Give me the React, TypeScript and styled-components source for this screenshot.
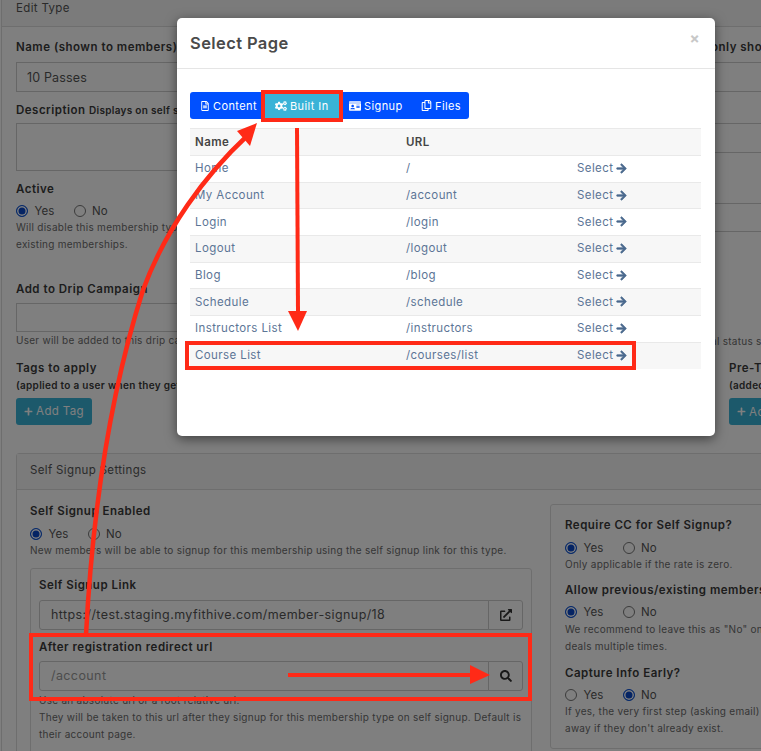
import React from "react";
import styled, { createGlobalStyle } from "styled-components";
import { FaArrowRight, FaCogs, FaExternalLinkAlt, FaPlus, FaRegCopy, FaRegFileAlt, FaIdCard, FaSearch } from "react-icons/fa";

const Global = createGlobalStyle`
  html, body { margin: 0; padding: 0; background: #808080; }
  * { box-sizing: border-box; }
  body { font-family: "Inter", "Liberation Sans", sans-serif; }
`;

const Viewport = styled.div`
  position: relative;
  width: 761px;
  height: 751px;
  overflow: hidden;
  background: #fff;
`;

const Page = styled.div`
  width: 1200px;
  color: #3f3f3f;
  font-size: 11.5px;
  letter-spacing: 0.35px;
`;

const PageCard = styled.div`
  margin-left: 1px;
  border-left: 1px solid #dcdcdc;
`;

const CardTitle = styled.div`
  height: 27px;
  padding: 1px 0 0 14px;
  font-size: 11.5px;
  color: #555;
  background: #f7f7f7;
  border-bottom: 1px solid #ddd;
  line-height: 15px;
`;

const CardBody = styled.div`
  padding: 13px 0 0 14px;
  display: grid;
  grid-template-columns: 695px 420px;
`;

const Col = styled.div`
  display: flex;
  flex-direction: column;
`;

const Label = styled.div`
  font-size: 11.5px;
  font-weight: 600;
  color: #3a3a3a;
  line-height: 15px;
  letter-spacing: 0.5px;
  white-space: nowrap;
`;

const SmallBold = styled.span`
  font-size: 10px;
  font-weight: 600;
  letter-spacing: 0.3px;
`;

const Input = styled.div<{ $h?: number; $t?: number }>`
  height: ${(p) => p.$h ?? 30}px;
  margin-top: ${(p) => p.$t ?? 7}px;
  padding: 0 10px;
  display: flex;
  align-items: center;
  border: 1px solid #ccc;
  background: #fff;
  font-size: 12.5px;
  letter-spacing: 0.15px;
  color: #555;
`;

const Spaced = styled.div<{ $t: number; $l?: number }>`
  margin-top: ${(p) => p.$t}px;
  padding-left: ${(p) => p.$l ?? 0}px;
`;

const Radios = styled.div`
  display: flex;
  gap: 19px;
  align-items: center;
  height: 16px;
  margin-top: 6.5px;
  font-size: 11.5px;
  letter-spacing: 0.1px;
  color: #555;
`;

const RadioItem = styled.label`
  display: flex;
  align-items: center;
  gap: 6.5px;
`;

const RadioDot = styled.span<{ $on?: boolean }>`
  width: 12px;
  height: 12px;
  border-radius: 50%;
  border: 1px solid ${(p) => (p.$on ? "#0d55d8" : "#777")};
  background: ${(p) => (p.$on ? "#0a48c8" : "#fff")};
  box-shadow: ${(p) => (p.$on ? "inset 0 0 0 1.5px #fff" : "none")};
`;

const Help = styled.div<{ $t?: number }>`
  margin-top: ${(p) => p.$t ?? 0}px;
  font-size: 10px;
  line-height: 17px;
  letter-spacing: 0.27px;
  white-space: nowrap;
  color: #6c6c6c;
`;

const BoldHelp = styled(Help)`
  margin-top: 1px;
  color: #3a3a3a;
`;

const TagButton = styled.div`
  width: 76px;
  height: 27px;
  margin-top: 4px;
  display: flex;
  align-items: center;
  justify-content: center;
  gap: 3px;
  background: #39b3d7;
  border-radius: 3px;
  color: #fff;
  font-size: 11.5px;
`;

const SignupCard = styled.div`
  margin: 27.5px 0 0 14px;
  width: 1000px;
  border: 1px solid #ddd;
  border-radius: 3px;
`;

const SignupHead = styled.div`
  height: 36px;
  padding: 0 0 2px 13px;
  display: flex;
  align-items: center;
  background: #f7f7f7;
  border-bottom: 1px solid #ddd;
  font-size: 11.5px;
  color: #555;
`;

const SignupBody = styled.div`
  padding: 14px 13px 0;
  display: grid;
  grid-template-columns: 502px 420px;
  column-gap: 18px;
  align-items: start;
`;

const LeftCol = styled(Col)`
  padding-top: 0.5px;
`;

const InnerBox = styled.div`
  margin-top: 9.5px;
  padding: 9px 8px 0;
  height: 240px;
  border: 1px solid #ddd;
  border-radius: 3px;
`;

const InputGroup = styled.div<{ $t: number }>`
  margin-top: ${(p) => p.$t}px;
  display: flex;
  height: 30px;
`;

const GroupInput = styled.div<{ $muted?: boolean }>`
  flex: 1;
  padding-left: 11px;
  display: flex;
  align-items: center;
  border: 1px solid #ccc;
  border-radius: 3px 0 0 3px;
  font-size: 12.5px;
  letter-spacing: 0.4px;
  color: ${(p) => (p.$muted ? "#999" : "#555")};
`;

const GroupButton = styled.div`
  width: 35px;
  margin-left: -1px;
  display: flex;
  align-items: center;
  justify-content: center;
  border: 1px solid #ccc;
  border-radius: 0 3px 3px 0;
  color: #333;
  font-size: 12px;
`;

const SideBox = styled.div`
  padding: 13.5px 14px 0;
  height: 245px;
  border: 1px solid #ddd;
  border-radius: 3px;
`;

const Shade = styled.div`
  position: absolute;
  inset: 0;
  background: rgba(0, 0, 0, 0.5);
`;

const Modal = styled.div`
  position: absolute;
  left: 177px;
  top: 18px;
  width: 538px;
  height: 418px;
  background: #fff;
  border-radius: 5px;
  box-shadow: 0 3px 12px rgba(0, 0, 0, 0.5);
  letter-spacing: 0.4px;
`;

const ModalHead = styled.div`
  height: 51px;
  padding: 0 15px 0 13px;
  display: flex;
  align-items: center;
  justify-content: space-between;
  border-bottom: 1px solid #e5e5e5;
`;

const ModalTitle = styled.div`
  font-size: 16.5px;
  font-weight: 600;
  color: #4a4a4a;
`;

const Close = styled.div`
  font-size: 15px;
  font-weight: 700;
  color: #c8c8c8;
  margin-top: -10px;
`;

const ModalBody = styled.div`
  padding: 23px 14px 0 13px;
`;

const Tabs = styled.div`
  display: inline-flex;
  height: 27px;
  background: #0050ff;
  border-radius: 3px;
`;

const Tab = styled.div<{ $active?: boolean; $w: number }>`
  width: ${(p) => p.$w}px;
  padding-left: 10px;
  display: flex;
  align-items: center;
  gap: 3px;
  color: #fff;
  font-size: 11px;
  background: ${(p) => (p.$active ? "#39b3d7" : "transparent")};
`;

const Table = styled.table`
  margin-top: 9px;
  width: 511px;
  border-collapse: collapse;
  table-layout: fixed;
  font-size: 11.5px;
`;

const Th = styled.th<{ $w?: number }>`
  height: 27px;
  padding: 0 5px;
  text-align: left;
  font-weight: 600;
  color: #444;
  background: #f7f7f7;
  border-top: 1px solid #e9e9e9;
  border-bottom: 1px solid #e9e9e9;
  ${(p) => (p.$w ? `width: ${p.$w}px;` : "")}
`;

const Tr = styled.tr`
  &:nth-child(even) td { background: #f7f7f7; }
`;

const Td = styled.td`
  height: 26.7px;
  padding: 0 5px 1px;
  color: #5c7596;
  border-bottom: 1px solid #e9e9e9;
  tr:last-child & { border-bottom: 0; }
`;

const SelectLink = styled.span`
  display: inline-flex;
  align-items: center;
  gap: 3px;
  svg {
    color: #4b6a8e;
    font-size: 11px;
    stroke: currentColor;
    stroke-width: 30;
  }
`;

const Annotations = styled.svg`
  position: absolute;
  left: 0;
  top: 0;
  width: 761px;
  height: 751px;
  pointer-events: none;
`;

const rows: [string, string][] = [
  ["Home", "/"],
  ["My Account", "/account"],
  ["Login", "/login"],
  ["Logout", "/logout"],
  ["Blog", "/blog"],
  ["Schedule", "/schedule"],
  ["Instructors List", "/instructors"],
  ["Course List", "/courses/list"],
];

const Radio = ({ yes }: { yes: boolean }) => (
  <Radios>
    <RadioItem><RadioDot $on={yes} />Yes</RadioItem>
    <RadioItem><RadioDot $on={!yes} />No</RadioItem>
  </Radios>
);

export default function App() {
  return (
    <Viewport>
      <Global />
      <Page>
        <PageCard>
          <CardTitle>Edit Type</CardTitle>
          <CardBody>
            <Col>
              <Label>Name (shown to members)</Label>
              <Input>10 Passes</Input>
              <Spaced $t={11}><Label>Description <SmallBold>Displays on self signup</SmallBold></Label></Spaced>
              <Input $h={48} $t={5} />
              <Spaced $t={10.5}><Label>Active</Label></Spaced>
              <Radio yes />
              <Help>Will disable this membership type for new<br />existing memberships.</Help>
              <Spaced $t={28.5}><Label>Add to Drip Campaign</Label></Spaced>
              <Input $h={29} $t={6.5} />
              <Help>User will be added to this drip campaign</Help>
              <Spaced $t={11.5}><Label>Tags to apply</Label></Spaced>
              <BoldHelp><SmallBold>(applied to a user when they get this)</SmallBold></BoldHelp>
              <TagButton><FaPlus size={9} />Add Tag</TagButton>
            </Col>
            <Col>
              <Label>only shown</Label>
              <Input />
              <Input $t={31} />
              <Input $h={29} $t={50} />
              <Help $t={100.5}>al status settings</Help>
              <Spaced $t={11.5} $l={18}>
                <Label>Pre-Tags</Label>
                <BoldHelp><SmallBold>(added to a user)</SmallBold></BoldHelp>
                <TagButton><FaPlus size={9} />Add Tag</TagButton>
              </Spaced>
            </Col>
          </CardBody>
          <SignupCard>
            <SignupHead>Self Signup Settings</SignupHead>
            <SignupBody>
              <LeftCol>
                <Label>Self Signup Enabled</Label>
                <Radio yes />
                <Help>New members will be able to signup for this membership using the self signup link for this type.</Help>
                <InnerBox>
                  <Label>Self Signup Link</Label>
                  <InputGroup $t={6.5}>
                    <GroupInput>https://test.staging.myfithive.com/member-signup/18</GroupInput>
                    <GroupButton><FaExternalLinkAlt /></GroupButton>
                  </InputGroup>
                  <Spaced $t={10.5}><Label>After registration redirect url</Label></Spaced>
                  <InputGroup $t={5.5}>
                    <GroupInput $muted>/account</GroupInput>
                    <GroupButton><FaSearch /></GroupButton>
                  </InputGroup>
                  <Help $t={1}>Use an absolute url or a root relative url.<br />They will be taken to this url after they signup for this membership type on self signup. Default is<br />their account page.</Help>
                </InnerBox>
              </LeftCol>
              <SideBox>
                <Label>Require CC for Self Signup?</Label>
                <Radio yes />
                <Help>Only applicable if the rate is zero.</Help>
                <Spaced $t={10}><Label>Allow previous/existing members</Label></Spaced>
                <Radio yes />
                <Help $t={1}>We recommend to leave this as "No" on<br />deals multiple times.</Help>
                <Spaced $t={10.5}><Label>Capture Info Early?</Label></Spaced>
                <Radio yes={false} />
                <Help>If yes, the very first step (asking email) will<br />away if they don't already exist.</Help>
              </SideBox>
            </SignupBody>
          </SignupCard>
        </PageCard>
      </Page>
      <Shade />
      <Modal>
        <ModalHead>
          <ModalTitle>Select Page</ModalTitle>
          <Close>×</Close>
        </ModalHead>
        <ModalBody>
          <Tabs>
            <Tab $w={75}><FaRegFileAlt size={10} />Content</Tab>
            <Tab $active $w={74}><FaCogs size={12} />Built In</Tab>
            <Tab $w={72}><FaIdCard size={12} />Signup</Tab>
            <Tab $w={58}><FaRegCopy size={11} />Files</Tab>
          </Tabs>
          <Table>
            <thead>
              <tr>
                <Th $w={211}>Name</Th>
                <Th $w={171}>URL</Th>
                <Th />
              </tr>
            </thead>
            <tbody>
              {rows.map(([name, url]) => (
                <Tr key={name}>
                  <Td>{name}</Td>
                  <Td>{url}</Td>
                  <Td><SelectLink>Select <FaArrowRight /></SelectLink></Td>
                </Tr>
              ))}
            </tbody>
          </Table>
        </ModalBody>
      </Modal>
      <Annotations viewBox="0 0 761 751" fill="none">
        <rect x="263" y="92" width="78" height="28" stroke="#ff2a17" strokeWidth="4" />
        <rect x="187" y="343" width="447" height="25" stroke="#ff2a17" strokeWidth="4" />
        <rect x="31" y="635" width="499" height="64" stroke="#ff2a17" strokeWidth="4" />
        <path d="M86 635 C 92 520, 108 400, 143 290 C 165 230, 205 175, 247 136" stroke="#ff2a17" strokeWidth="4.5" />
        <polygon points="257,123 250,146 237,131" fill="#ff2a17" />
        <path d="M297 128 L298 312" stroke="#ff2a17" strokeWidth="4" />
        <polygon points="288,311 307,311 298,331" fill="#ff2a17" />
        <path d="M288 675 L471 675" stroke="#ff2a17" strokeWidth="4" />
        <polygon points="470,665 490,675 470,684" fill="#ff2a17" />
      </Annotations>
    </Viewport>
  );
}
